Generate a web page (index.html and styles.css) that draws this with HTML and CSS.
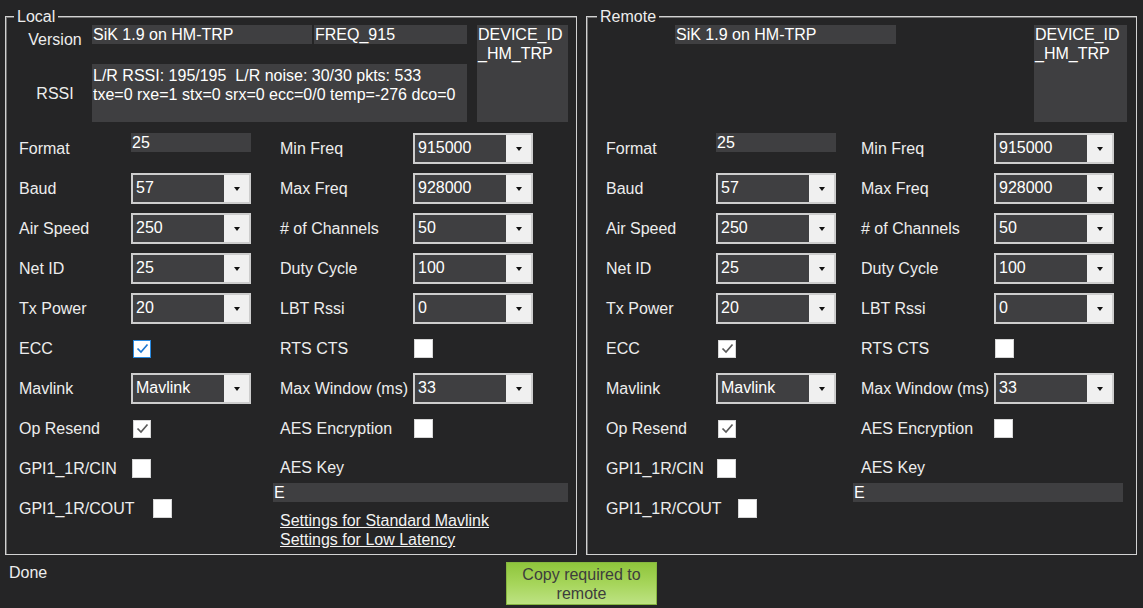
FILE: index.html
```html
<!DOCTYPE html>
<html>
<head>
<meta charset="utf-8">
<title>SiK Radio</title>
<link rel="stylesheet" href="styles.css">
</head>
<body>
<div class="groups">
  <section class="group local">
    <span class="group-title">Local</span>
    <div class="top">
      <div class="top-label version-label">Version</div>
      <div class="tb box-ver">SiK 1.9 on HM-TRP</div>
      <div class="tb box-freq">FREQ_915</div>
      <div class="tb box-dev">DEVICE_ID<br>_HM_TRP</div>
      <div class="top-label rssi-label">RSSI</div>
      <div class="tb box-rssi">L/R RSSI: 195/195&nbsp; L/R noise: 30/30 pkts: 533<br>txe=0 rxe=1 stx=0 srx=0 ecc=0/0 temp=-276 dco=0</div>
    </div>
    <div class="form">
      <div class="grid col-left">
        <div class="lbl">Format</div><div class="tb field">25</div>
        <div class="lbl">Baud</div><div class="combo"><span class="val">57</span><span class="btn"><i class="tri"></i></span></div>
        <div class="lbl">Air Speed</div><div class="combo"><span class="val">250</span><span class="btn"><i class="tri"></i></span></div>
        <div class="lbl">Net ID</div><div class="combo"><span class="val">25</span><span class="btn"><i class="tri"></i></span></div>
        <div class="lbl">Tx Power</div><div class="combo"><span class="val">20</span><span class="btn"><i class="tri"></i></span></div>
        <div class="lbl">ECC</div><div class="cb cb-near checked focus"><svg width="13" height="11" viewBox="0 0 13 11"><path d="M1.5 5.5 L5 9 L11.5 1.5" /></svg></div>
        <div class="lbl">Mavlink</div><div class="combo"><span class="val">Mavlink</span><span class="btn"><i class="tri"></i></span></div>
        <div class="lbl">Op Resend</div><div class="cb cb-near checked"><svg width="13" height="11" viewBox="0 0 13 11"><path d="M1.5 5.5 L5 9 L11.5 1.5" /></svg></div>
        <div class="lbl">GPI1_1R/CIN</div><div class="cb"></div>
        <div class="lbl">GPI1_1R/COUT</div><div class="cb cb-far"></div>
      </div>
      <div class="col-right">
        <div class="grid">
          <div class="lbl">Min Freq</div><div class="combo"><span class="val">915000</span><span class="btn"><i class="tri"></i></span></div>
          <div class="lbl">Max Freq</div><div class="combo"><span class="val">928000</span><span class="btn"><i class="tri"></i></span></div>
          <div class="lbl"># of Channels</div><div class="combo"><span class="val">50</span><span class="btn"><i class="tri"></i></span></div>
          <div class="lbl">Duty Cycle</div><div class="combo"><span class="val">100</span><span class="btn"><i class="tri"></i></span></div>
          <div class="lbl">LBT Rssi</div><div class="combo"><span class="val">0</span><span class="btn"><i class="tri"></i></span></div>
          <div class="lbl">RTS CTS</div><div class="cb"></div>
          <div class="lbl">Max Window (ms)</div><div class="combo"><span class="val">33</span><span class="btn"><i class="tri"></i></span></div>
          <div class="lbl">AES Encryption</div><div class="cb"></div>
        </div>
        <div class="aes-label">AES Key</div>
        <div class="tb aes-key">E</div>
        <div class="links">
          <a href="#" class="link">Settings for Standard Mavlink</a>
          <a href="#" class="link">Settings for Low Latency</a>
        </div>
      </div>
    </div>
  </section>

  <section class="group remote">
    <span class="group-title">Remote</span>
    <div class="top">
      <div class="tb box-ver">SiK 1.9 on HM-TRP</div>
      <div class="tb box-dev">DEVICE_ID<br>_HM_TRP</div>
    </div>
    <div class="form">
      <div class="grid col-left">
        <div class="lbl">Format</div><div class="tb field">25</div>
        <div class="lbl">Baud</div><div class="combo"><span class="val">57</span><span class="btn"><i class="tri"></i></span></div>
        <div class="lbl">Air Speed</div><div class="combo"><span class="val">250</span><span class="btn"><i class="tri"></i></span></div>
        <div class="lbl">Net ID</div><div class="combo"><span class="val">25</span><span class="btn"><i class="tri"></i></span></div>
        <div class="lbl">Tx Power</div><div class="combo"><span class="val">20</span><span class="btn"><i class="tri"></i></span></div>
        <div class="lbl">ECC</div><div class="cb cb-near checked"><svg width="13" height="11" viewBox="0 0 13 11"><path d="M1.5 5.5 L5 9 L11.5 1.5" /></svg></div>
        <div class="lbl">Mavlink</div><div class="combo"><span class="val">Mavlink</span><span class="btn"><i class="tri"></i></span></div>
        <div class="lbl">Op Resend</div><div class="cb cb-near checked"><svg width="13" height="11" viewBox="0 0 13 11"><path d="M1.5 5.5 L5 9 L11.5 1.5" /></svg></div>
        <div class="lbl">GPI1_1R/CIN</div><div class="cb"></div>
        <div class="lbl">GPI1_1R/COUT</div><div class="cb cb-far"></div>
      </div>
      <div class="col-right">
        <div class="grid">
          <div class="lbl">Min Freq</div><div class="combo"><span class="val">915000</span><span class="btn"><i class="tri"></i></span></div>
          <div class="lbl">Max Freq</div><div class="combo"><span class="val">928000</span><span class="btn"><i class="tri"></i></span></div>
          <div class="lbl"># of Channels</div><div class="combo"><span class="val">50</span><span class="btn"><i class="tri"></i></span></div>
          <div class="lbl">Duty Cycle</div><div class="combo"><span class="val">100</span><span class="btn"><i class="tri"></i></span></div>
          <div class="lbl">LBT Rssi</div><div class="combo"><span class="val">0</span><span class="btn"><i class="tri"></i></span></div>
          <div class="lbl">RTS CTS</div><div class="cb"></div>
          <div class="lbl">Max Window (ms)</div><div class="combo"><span class="val">33</span><span class="btn"><i class="tri"></i></span></div>
          <div class="lbl">AES Encryption</div><div class="cb cb-zero"></div>
        </div>
        <div class="aes-label">AES Key</div>
        <div class="tb aes-key">E</div>
      </div>
    </div>
  </section>
</div>

<div class="status">
  <div class="done">Done</div>
  <button class="copy-btn">Copy required to<br>remote</button>
</div>
</body>
</html>
```

FILE: styles.css
```css
html, body {
  margin: 0;
  padding: 0;
}
body {
  background: #252526;
  color: #ededed;
  font-family: "Liberation Sans", Arial, sans-serif;
  font-size: 16px;
  width: 1143px;
  height: 608px;
  overflow: hidden;
}

.groups {
  display: flex;
  padding-top: 16px;
}
.group {
  position: relative;
  box-sizing: border-box;
  height: 539px;
  border: 1px solid #d2d2d2;
  box-shadow: inset 1px 1px 0 #707070;
}
.local { margin-left: 5px; width: 572px; }
.remote { margin-left: 9px; width: 551px; }

.group-title {
  position: absolute;
  top: -10px;
  left: 8px;
  padding: 0 3px;
  background: #252526;
  line-height: 19px;
}
.remote .group-title { left: 10px; }

/* top section */
.top {
  display: grid;
  margin-top: 8px;
  grid-template-rows: 19px 20px 58px;
}
.local .top { grid-template-columns: 86px 222px 163px 91px; }
.remote .top { grid-template-columns: 88px 359px 93px; }

.tb {
  background: #3f3f41;
  color: #ffffff;
  line-height: 19px;
  padding-left: 1px;
  box-sizing: border-box;
  white-space: nowrap;
  overflow: hidden;
}
.top-label {
  text-align: center;
  padding-left: 12px;
  line-height: 19px;
}
.version-label { grid-column: 1; grid-row: 1; margin-top: 5px; }
.local .box-ver { grid-column: 2; grid-row: 1; width: 220px; }
.box-freq { grid-column: 3; grid-row: 1; width: 153px; }
.local .box-dev { grid-column: 4; grid-row: 1 / span 3; }
.rssi-label { grid-column: 1; grid-row: 3; align-self: center; }
.box-rssi { grid-column: 2 / span 2; grid-row: 3; width: 375px; padding-top: 2px; }
.remote .box-ver { grid-column: 2; grid-row: 1; width: 221px; }
.remote .box-dev { grid-column: 3; grid-row: 1 / span 3; }

/* form */
.form {
  display: flex;
  margin-top: 11px;
  align-items: flex-start;
}
.grid {
  display: grid;
  grid-auto-rows: 31px;
  row-gap: 9px;
  align-items: center;
}
.local .col-left { margin-left: 13px; grid-template-columns: 112px 120px; }
.remote .col-left { margin-left: 19px; grid-template-columns: 110px 120px; }
.local .col-right { margin-left: 22px; width: 295px; }
.remote .col-right { margin-left: 17px; width: 270px; }
.local .col-right .grid { grid-template-columns: 140px 120px; }
.remote .col-right .grid { grid-template-columns: 141px 120px; }
.local .col-right .lbl, .local .aes-label, .local .links { padding-left: 7px; }
.remote .col-right .lbl, .remote .aes-label { padding-left: 8px; }

.lbl {
  white-space: nowrap;
  line-height: 19px;
}
.field {
  align-self: start;
  width: 120px;
  height: 19px;
}

.combo {
  display: flex;
  box-sizing: border-box;
  width: 120px;
  height: 31px;
  border: 2px solid #cdcdcd;
  background: #f0f0f0;
}
.combo .val {
  flex: 1;
  background: #3f3f41;
  color: #ffffff;
  line-height: 26px;
  padding-left: 3px;
  white-space: nowrap;
}
.combo .btn {
  width: 25px;
  display: flex;
  align-items: center;
  justify-content: center;
}
.tri {
  width: 0;
  height: 0;
  border-left: 3.5px solid transparent;
  border-right: 3.5px solid transparent;
  border-top: 4px solid #111;
}

.cb {
  box-sizing: border-box;
  width: 19px;
  height: 19px;
  margin-left: 1px;
  background: #ffffff;
  border: 1px solid #d6d6d6;
  display: flex;
  align-items: center;
  justify-content: center;
}
.cb-near { margin-left: 2px; width: 18px; height: 18px; }
.cb-far { margin-left: 22px; }
.cb-zero { margin-left: 0; }
.cb svg path {
  fill: none;
  stroke: #5a5a5a;
  stroke-width: 1.7;
}
.cb.focus { border-color: #2a8ae0; }
.cb.focus svg path { stroke: #1f78d1; }

.aes-label {
  margin-top: 9px;
  line-height: 30px;
  height: 30px;
}
.aes-key {
  height: 19px;
}
.links {
  margin-top: 9px;
  display: flex;
  flex-direction: column;
}
.link {
  color: #f2f2f2;
  text-decoration: underline;
  line-height: 19px;
  align-self: flex-start;
}

/* status bar */
.status {
  display: grid;
  grid-template-columns: 506px 151px;
  margin-top: 7px;
}
.done {
  padding-left: 9px;
  padding-top: 1px;
  line-height: 19px;
}
.copy-btn {
  box-sizing: border-box;
  width: 151px;
  height: 43px;
  margin: 0;
  padding: 1px 0 0;
  border: 1px solid #86b640;
  background: linear-gradient(to bottom, #8fc53c 0%, #a6d55a 50%, #bde283 100%);
  color: #3d3d3d;
  font-family: "Liberation Sans", Arial, sans-serif;
  font-size: 16px;
  line-height: 19px;
  text-align: center;
}
```
